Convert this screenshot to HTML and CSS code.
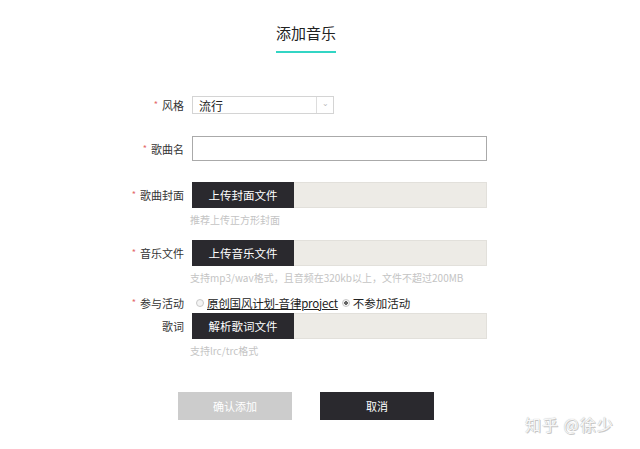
FILE: index.html
```html
<!DOCTYPE html>
<html lang="zh">
<head>
    <meta charset="utf-8">
    <title>添加音乐</title>
    <link rel="stylesheet" href="styles.css">
</head>
<body>
<div class="page">
    <div class="title">
        <h1>添加音乐</h1>
    </div>

    <div class="form">
        <div class="row row-style">
            <label class="label"><span class="req">*</span>风格</label>
            <div class="select">
                <span class="select-text">流行</span>
                <span class="select-arrow">&#8964;</span>
            </div>
        </div>

        <div class="row row-name">
            <label class="label"><span class="req">*</span>歌曲名</label>
            <input class="text-input" type="text">
        </div>

        <div class="row row-upload">
            <label class="label"><span class="req">*</span>歌曲封面</label>
            <div class="upload">
                <span class="upload-btn">上传封面文件</span>
            </div>
        </div>
        <p class="hint">推荐上传正方形封面</p>

        <div class="row row-upload">
            <label class="label"><span class="req">*</span>音乐文件</label>
            <div class="upload">
                <span class="upload-btn">上传音乐文件</span>
            </div>
        </div>
        <p class="hint">支持mp3/wav格式，且音频在320kb以上，文件不超过200MB</p>

        <div class="row row-radio">
            <label class="label"><span class="req">*</span>参与活动</label>
            <div class="radios">
                <span class="radio"></span><a class="radio-link">原创国风计划-音律project</a>
                <span class="radio checked"></span><span class="radio-text">不参加活动</span>
            </div>
        </div>

        <div class="row row-lyric">
            <label class="label">歌词</label>
            <div class="upload">
                <span class="upload-btn">解析歌词文件</span>
            </div>
        </div>
        <p class="hint">支持lrc/trc格式</p>
    </div>

    <div class="actions">
        <button class="btn btn-confirm">确认添加</button>
        <button class="btn btn-cancel">取消</button>
    </div>

    <div class="watermark">知乎 @徐少</div>
</div>
</body>
</html>
```

FILE: styles.css
```css
* {
    box-sizing: border-box;
}
body {
    margin: 0;
    background: #fff;
    font-family: "Microsoft YaHei", "Noto Sans CJK SC", "Liberation Sans", sans-serif;
    color: #333;
}
.page {
    position: relative;
    width: 640px;
    height: 449px;
    overflow: hidden;
}

.title {
    width: 60px;
    margin: 0 0 0 276px;
    padding-top: 23px;
}
.title h1 {
    margin: 0;
    font-size: 15px;
    font-weight: 400;
    line-height: 20px;
    color: #222;
    white-space: nowrap;
    padding-bottom: 8px;
    border-bottom: 2px solid #32d5c4;
}

.form {
    margin-left: 128px;
    width: 380px;
}
.row {
    display: flex;
    align-items: center;
}
.label {
    width: 64px;
    padding-right: 8px;
    text-align: right;
    font-size: 11px;
    color: #333;
    white-space: nowrap;
}
.req {
    color: #e46a6a;
    font-size: 9px;
    margin-right: 4px;
    vertical-align: 2px;
}

.row-style {
    margin-top: 43px;
}
.select {
    width: 142px;
    height: 18px;
    border: 1px solid #d4d4d4;
    display: flex;
    align-items: center;
}
.select-text {
    flex: 1;
    font-size: 12px;
    padding-left: 6px;
    color: #222;
}
.select-arrow {
    width: 17px;
    height: 100%;
    border-left: 1px solid #ddd;
    color: #bbb;
    font-size: 8px;
    text-align: center;
    line-height: 12px;
}

.row-name {
    margin-top: 22px;
}
.text-input {
    width: 295px;
    height: 25px;
    border: 1px solid #aaa;
    margin: 0;
    padding: 0;
    outline: none;
}

.row-upload {
    margin-top: 21px;
}
.upload {
    width: 295px;
    height: 26px;
    background: #edebe6;
    border: 1px solid #e2e0db;
    display: flex;
}
.upload-btn {
    width: 102px;
    margin: -1px 0 -1px -1px;
    background: #2a292e;
    color: #fff;
    font-size: 11.5px;
    display: flex;
    align-items: center;
    justify-content: center;
}
.hint {
    margin: 5px 0 0 62px;
    font-size: 10px;
    line-height: 14px;
    color: #c4c4c4;
    white-space: nowrap;
}
.row-upload + .hint + .row-upload {
    margin-top: 13px;
}

.row-radio {
    margin-top: 10px;
    height: 16px;
}
.radios {
    display: flex;
    align-items: center;
    font-size: 11.5px;
    color: #222;
    white-space: nowrap;
}
.radio {
    width: 8px;
    height: 8px;
    border: 1px solid #c8c8c8;
    border-radius: 50%;
    margin: 0 3px 0 4px;
    background: #f4f4f4;
}
.radio.checked {
    background: radial-gradient(circle, #666 0 1.6px, #f4f4f4 2px);
}
.radio-link {
    text-decoration: underline;
    color: #222;
    letter-spacing: -0.2px;
}
.row-lyric {
    margin-top: 2px;
}

.actions {
    display: flex;
    gap: 28px;
    margin: 34px 0 0 178px;
}
.btn {
    width: 114px;
    height: 28px;
    border: none;
    font-family: inherit;
    font-size: 11px;
    color: #fff;
}
.btn-confirm {
    background: #cccccc;
}
.btn-cancel {
    background: #2a292e;
}

.watermark {
    position: absolute;
    left: 525px;
    top: 412px;
    font-size: 16px;
    color: #f7f7f7;
    text-shadow: 0 0 1px #aaa, 1px 1px 0 #ccc;
    letter-spacing: 1px;
}
```
